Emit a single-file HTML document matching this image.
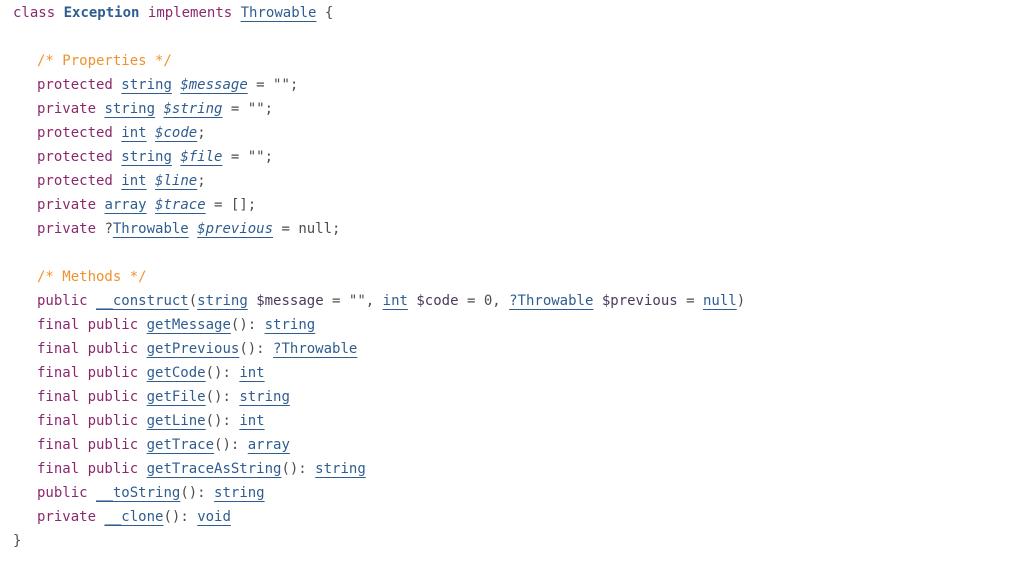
<!DOCTYPE html>
<html><head><style>
html,body{margin:0;padding:0;background:#fff;width:1026px;height:562px;overflow:hidden}
pre{margin:0;padding:1px 0 0 13px;font-family:"DejaVu Sans Mono","Liberation Mono",monospace;font-size:14px;line-height:24px;color:#4d4d4d}
.k{color:#8a2a6e}
.t{color:#2f5d8f;text-decoration:underline;text-underline-offset:4px;text-decoration-thickness:1px}
.v{color:#2f5d8f;font-style:italic;text-decoration:underline;text-underline-offset:4px;text-decoration-thickness:1px}
.p{color:#4a3a5e}
.c{color:#f0922e}
.b{color:#2f5d8f;font-weight:bold}
.i{padding-left:24px;display:inline-block}
</style></head><body><pre><span class="k">class</span> <span class="b">Exception</span> <span class="k">implements</span> <span class="t">Throwable</span> {

<span class="i"><span class="c">/* Properties */</span></span>
<span class="i"><span class="k">protected</span> <span class="t">string</span> <span class="v">$message</span> = "";</span>
<span class="i"><span class="k">private</span> <span class="t">string</span> <span class="v">$string</span> = "";</span>
<span class="i"><span class="k">protected</span> <span class="t">int</span> <span class="v">$code</span>;</span>
<span class="i"><span class="k">protected</span> <span class="t">string</span> <span class="v">$file</span> = "";</span>
<span class="i"><span class="k">protected</span> <span class="t">int</span> <span class="v">$line</span>;</span>
<span class="i"><span class="k">private</span> <span class="t">array</span> <span class="v">$trace</span> = [];</span>
<span class="i"><span class="k">private</span> ?<span class="t">Throwable</span> <span class="v">$previous</span> = null;</span>

<span class="i"><span class="c">/* Methods */</span></span>
<span class="i"><span class="k">public</span> <span class="t">__construct</span>(<span class="t">string</span> <span class="p">$message</span> = "", <span class="t">int</span> <span class="p">$code</span> = 0, <span class="t">?Throwable</span> <span class="p">$previous</span> = <span class="t">null</span>)</span>
<span class="i"><span class="k">final public</span> <span class="t">getMessage</span>(): <span class="t">string</span></span>
<span class="i"><span class="k">final public</span> <span class="t">getPrevious</span>(): <span class="t">?Throwable</span></span>
<span class="i"><span class="k">final public</span> <span class="t">getCode</span>(): <span class="t">int</span></span>
<span class="i"><span class="k">final public</span> <span class="t">getFile</span>(): <span class="t">string</span></span>
<span class="i"><span class="k">final public</span> <span class="t">getLine</span>(): <span class="t">int</span></span>
<span class="i"><span class="k">final public</span> <span class="t">getTrace</span>(): <span class="t">array</span></span>
<span class="i"><span class="k">final public</span> <span class="t">getTraceAsString</span>(): <span class="t">string</span></span>
<span class="i"><span class="k">public</span> <span class="t">__toString</span>(): <span class="t">string</span></span>
<span class="i"><span class="k">private</span> <span class="t">__clone</span>(): <span class="t">void</span></span>
}</pre></body></html>
